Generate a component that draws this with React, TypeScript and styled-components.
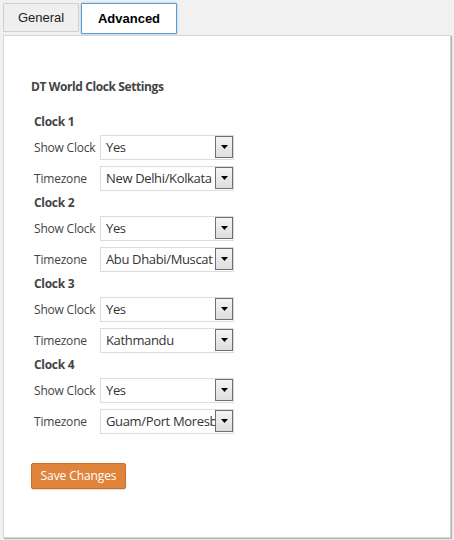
import React from "react";
import styled, { createGlobalStyle } from "styled-components";

const Global = createGlobalStyle`
  html, body { margin: 0; padding: 0; background: #f1f1f1; }
  body { font-family: "Open Sans", sans-serif; }
`;

const Page = styled.div`
  width: 454px;
  height: 540px;
  box-sizing: border-box;
  padding: 3px 3px 0 3px;
  display: flex;
  flex-direction: column;
`;

const Tabs = styled.div`
  display: flex;
  gap: 2px;
  height: 30px;
  margin-bottom: 2px;
`;

const Tab = styled.button<{ $active?: boolean }>`
  box-sizing: border-box;
  height: ${(p) => (p.$active ? "31px" : "29px")};
  width: ${(p) => (p.$active ? "96px" : "76px")};
  margin: 0;
  padding: 0;
  font-family: "Liberation Sans", Arial, sans-serif;
  font-size: 13px;
  font-weight: ${(p) => (p.$active ? 700 : 400)};
  color: ${(p) => (p.$active ? "#000" : "#222")};
  background: ${(p) => (p.$active ? "#fff" : "#efefef")};
  border: 1px solid ${(p) => (p.$active ? "#5b9dd9" : "#cfcfcf")};
  box-shadow: ${(p) => (p.$active ? "0 0 2px rgba(30,140,190,0.6)" : "none")};
  border-radius: 1px;
`;

const Panel = styled.div`
  box-sizing: border-box;
  width: 448px;
  height: 503px;
  background: #fff;
  border: 1px solid #d4d4d4;
  box-shadow: 1px 1px 1px rgba(0, 0, 0, 0.25);
  padding: 43px 0 0 27px;
  display: flex;
  flex-direction: column;
`;

const Title = styled.h2`
  margin: 0 0 19px 0;
  font-size: 12px;
  line-height: 16px;
  font-weight: 700;
  letter-spacing: -0.4px;
  color: #444;
`;

const Group = styled.div`
  display: flex;
  flex-direction: column;
  padding-left: 3px;
  margin-bottom: 4px;
`;

const GroupTitle = styled.h3`
  margin: 0 0 5px 0;
  font-size: 12px;
  line-height: 16px;
  font-weight: 700;
  letter-spacing: -0.3px;
  color: #444;
`;

const Row = styled.div`
  display: flex;
  align-items: center;
  height: 25px;
  & + & {
    margin-top: 6px;
  }
`;

const Label = styled.span`
  width: 66px;
  font-size: 12px;
  letter-spacing: -0.2px;
  color: #444;
  white-space: nowrap;
`;

const SelectBox = styled.div`
  box-sizing: border-box;
  width: 134px;
  height: 25px;
  border: 1px solid #dcdcdc;
  background: #fff;
  display: flex;
  align-items: stretch;
`;

const SelectText = styled.span`
  flex: 1;
  overflow: hidden;
  white-space: nowrap;
  padding-left: 5px;
  font-size: 13px;
  letter-spacing: -0.35px;
  line-height: 23px;
  color: #333;
`;

const Arrow = styled.span`
  box-sizing: border-box;
  width: 18px;
  flex: none;
  border: 1px solid #6f6f6f;
  background: linear-gradient(#f4f4f4, #dedede);
  display: flex;
  align-items: center;
  justify-content: center;
  margin: 0 0 1px 0;
`;

const Save = styled.button`
  align-self: flex-start;
  margin: 25px 0 0 0;
  box-sizing: border-box;
  width: 95px;
  height: 26px;
  padding: 0 0 1px 0;
  font-family: "Open Sans", sans-serif;
  font-size: 12px;
  letter-spacing: -0.1px;
  color: #fff;
  background: #e0843c;
  border: 1px solid #c76f2c;
  border-radius: 2px;
  box-shadow: 0 1px 1px rgba(0, 0, 0, 0.15);
`;

function Select({ value }: { value: string }) {
  return (
    <SelectBox>
      <SelectText>{value}</SelectText>
      <Arrow>
        <svg width="7" height="4" viewBox="0 0 7 4">
          <path d="M0 0h7L3.5 4z" fill="#000" />
        </svg>
      </Arrow>
    </SelectBox>
  );
}

const clocks = [
  { n: 1, tz: "New Delhi/Kolkata" },
  { n: 2, tz: "Abu Dhabi/Muscat" },
  { n: 3, tz: "Kathmandu" },
  { n: 4, tz: "Guam/Port Moresby" },
];

export default function App() {
  return (
    <>
      <Global />
      <Page>
        <Tabs>
          <Tab>General</Tab>
          <Tab $active>Advanced</Tab>
        </Tabs>
        <Panel>
          <Title>DT World Clock Settings</Title>
          {clocks.map((c) => (
            <Group key={c.n}>
              <GroupTitle>Clock {c.n}</GroupTitle>
              <Row>
                <Label>Show Clock</Label>
                <Select value="Yes" />
              </Row>
              <Row>
                <Label>Timezone</Label>
                <Select value={c.tz} />
              </Row>
            </Group>
          ))}
          <Save>Save Changes</Save>
        </Panel>
      </Page>
    </>
  );
}
